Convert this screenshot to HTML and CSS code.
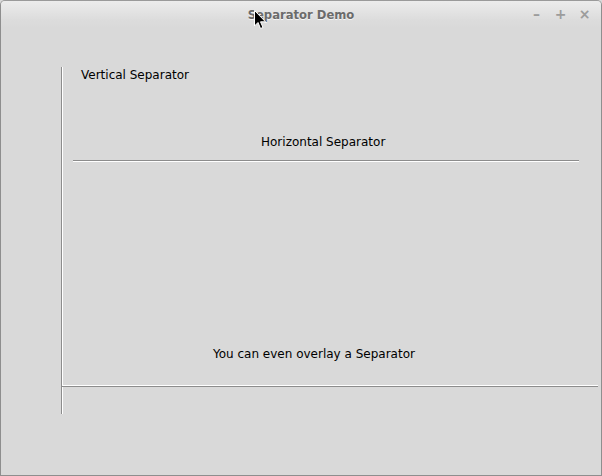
FILE: index.html
```html
<!DOCTYPE html>
<html>
<head>
<meta charset="utf-8">
<link rel="stylesheet" href="styles.css">
</head>
<body>
<div class="window">
  <div class="titlebar">
    <span class="title">Separator Demo</span>
    <div class="controls">
      <span class="ctl">&#8211;</span>
      <span class="ctl">+</span>
      <span class="ctl">&#215;</span>
    </div>
    <svg class="cursor" width="13" height="20" viewBox="0 0 13 20">
      <path d="M0.5 0.5 L0.5 16 L4 12.5 L6.5 18.5 L9 17.5 L6.5 11.8 L11.5 11.8 Z" fill="#000" stroke="#fff" stroke-width="1"/>
    </svg>
  </div>
  <div class="content">
    <div class="vsep"></div>
    <div class="panel">
      <div class="label label-v">Vertical Separator</div>
      <div class="label label-h">Horizontal Separator</div>
      <div class="hsep"></div>
      <div class="label label-o">You can even overlay a Separator</div>
      <div class="osep"></div>
    </div>
  </div>
</div>
</body>
</html>
```

FILE: styles.css
```css
html, body {
  margin: 0;
  padding: 0;
  background: #d9d9d9;
}
.window {
  width: 602px;
  height: 476px;
  box-sizing: border-box;
  border: 1px solid #8e8e8e;
  border-top-color: #9a9a9a;
  border-radius: 5px 5px 0 0;
  background: #d9d9d9;
  overflow: hidden;
  font-family: "DejaVu Sans", sans-serif;
}
.titlebar {
  position: relative;
  height: 27px;
  background: linear-gradient(#ececec, #dcdcdc 70%, #d9d9d9);
  display: flex;
  align-items: center;
  justify-content: center;
}
.title {
  font-weight: bold;
  font-size: 11.6px;
  color: #6b6b6b;
  text-shadow: 0 1px 0 #f4f4f4;
}
.controls {
  position: absolute;
  right: 10px;
  top: 5px;
  display: flex;
  gap: 11px;
  font-weight: bold;
  font-size: 14px;
  color: #9c9c9c;
}
.ctl {
  width: 13px;
  text-align: center;
}
.cursor {
  position: absolute;
  left: 253px;
  top: 9px;
}
.content {
  display: flex;
  padding-top: 39px;
  padding-left: 60px;
}
.vsep {
  width: 1px;
  height: 347px;
  background: #8c8c8c;
  border-right: 1px solid #ffffff;
}
.panel {
  flex: 1;
  display: flex;
  flex-direction: column;
  align-items: flex-start;
}
.label {
  font-size: 12px;
  line-height: 14px;
  color: #000;
  white-space: nowrap;
}
.label-v {
  margin-top: 1px;
  margin-left: 18px;
}
.label-h {
  margin-top: 53px;
  margin-left: 198px;
}
.hsep {
  margin-top: 11px;
  margin-left: 10px;
  width: 506px;
  height: 1px;
  background: #8c8c8c;
  border-bottom: 1px solid #ffffff;
}
.label-o {
  margin-top: 185px;
  margin-left: 150px;
}
.osep {
  margin-top: 24px;
  margin-left: -1px;
  width: 536px;
  height: 1px;
  background: #ffffff;
  border-bottom: 1px solid #8c8c8c;
}
```
